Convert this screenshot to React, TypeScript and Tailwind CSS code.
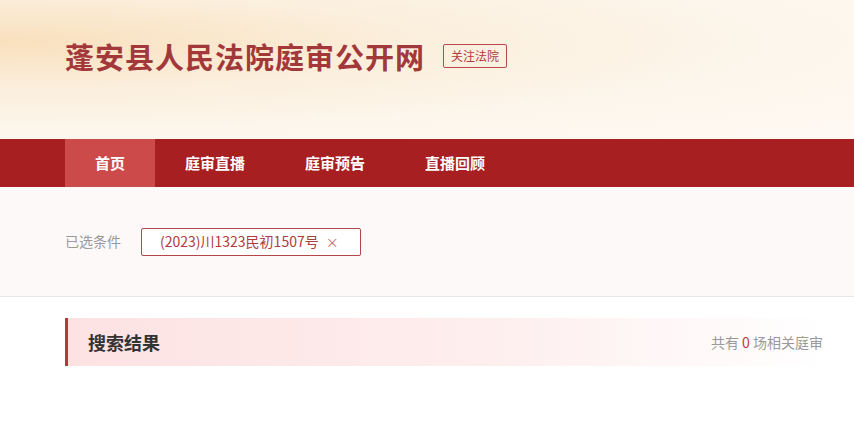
import React from 'react';

const navItems = ['首页', '庭审直播', '庭审预告', '直播回顾'];

export default function App() {
  return (
    <div className="min-h-[436px] w-full bg-white font-['Noto_Sans_CJK_SC','Noto_Sans',sans-serif]">
      {/* banner */}
      <div className="h-[139px] bg-[radial-gradient(ellipse_at_0%_30%,#f9e0bd_0%,#fbefdd_35%,#fdf6ec_65%,#fef9f3_100%)]">
        <div className="flex items-center pl-[65px] pt-[37px]">
          <h1 className="text-[29px] font-bold leading-[38px] tracking-[1px] text-[#a3383b]">蓬安县人民法院庭审公开网</h1>
          <span className="ml-[18px] rounded-[2px] border border-[#b8484c] px-[7px] text-[12px] leading-[22px] text-[#b03b40]">关注法院</span>
        </div>
      </div>

      {/* nav */}
      <div className="flex h-[48px] bg-[#a81f22] pl-[65px]">
        {navItems.map((item, i) => (
          <div
            key={item}
            className={`flex items-center px-[30px] text-[15px] font-bold text-white ${i === 0 ? 'bg-[#cc4a4a]' : ''}`}
          >
            {item}
          </div>
        ))}
      </div>

      {/* selected filters */}
      <div className="flex h-[110px] items-center border-b border-[#ebe7e7] bg-[#fdf9f9] pl-[65px]">
        <span className="text-[14px] text-[#999]">已选条件</span>
        <div className="ml-[20px] flex h-[28px] w-[220px] items-center rounded-[2px] border border-[#b34649] bg-white pl-[18px] text-[14px] text-[#b03b40]">
          (2023)川1323民初1507号
          <span className="ml-[7px] text-[13px] text-[#c0676a]">×</span>
        </div>
      </div>

      {/* results */}
      <div className="pl-[65px] pt-[21px]">
        <div className="flex h-[48px] w-[765px] items-center justify-between border-l-[3px] border-[#b03a3d] bg-[linear-gradient(90deg,#fde2e2_0%,#feeeee_55%,#ffffff_100%)] pl-[20px] pr-[7px]">
          <span className="text-[18px] font-bold text-[#333]">搜索结果</span>
          <span className="text-[14px] text-[#999]">
            共有 <span className="text-[#c0393d]">0</span> 场相关庭审
          </span>
        </div>
      </div>
    </div>
  );
}
